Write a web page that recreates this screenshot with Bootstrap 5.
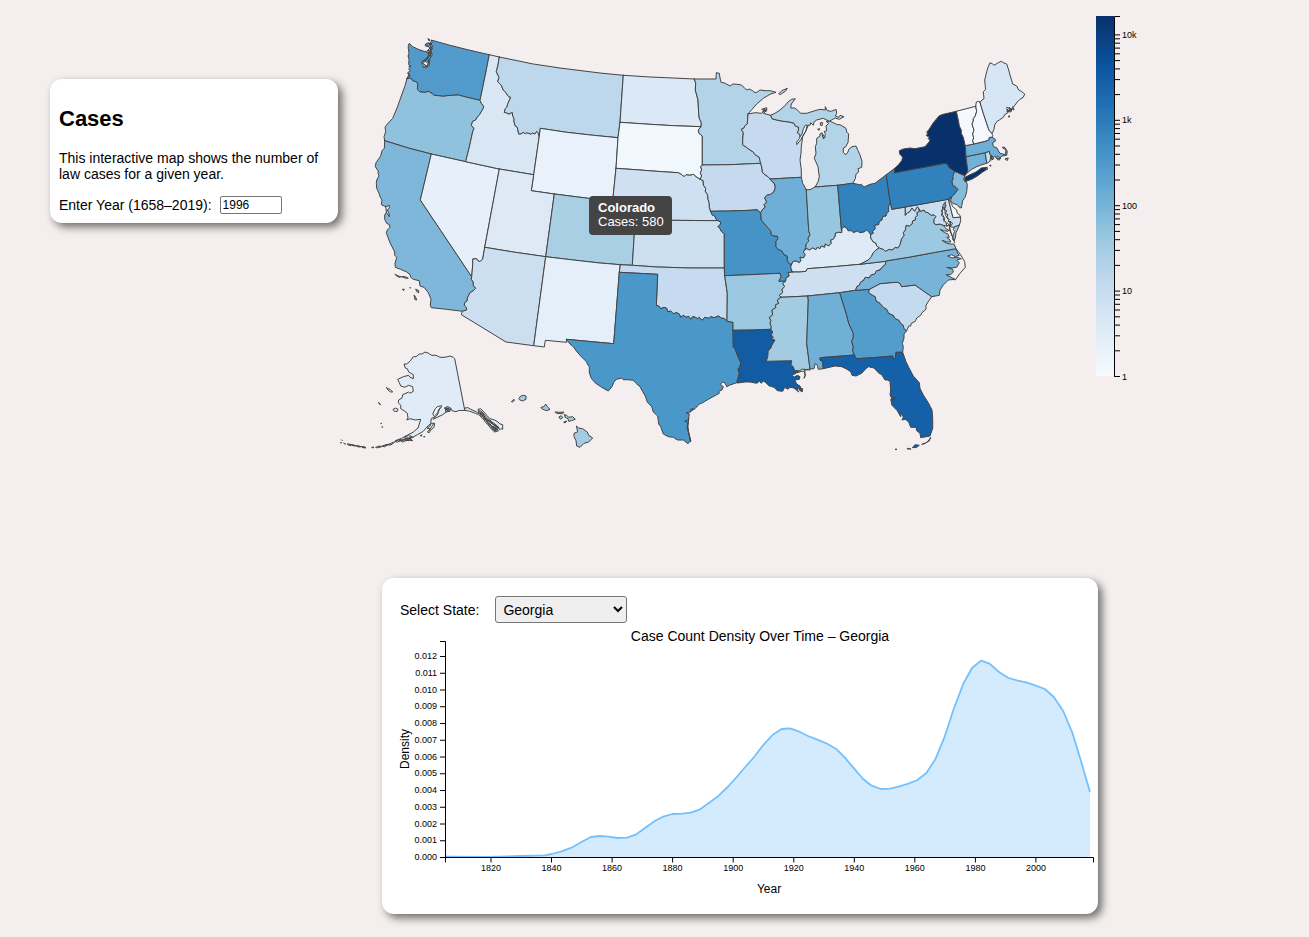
<!DOCTYPE html>
<html lang="en">
<head>
<meta charset="utf-8">
<meta name="viewport" content="width=device-width, initial-scale=1">
<title>Cases</title>
<link href="https://cdn.jsdelivr.net/npm/bootstrap@5.3.0/dist/css/bootstrap.min.css" rel="stylesheet">
<style>
  body { background: #f4eeee; color: #000; font: 14px/16px "Liberation Sans", Arial, sans-serif; }
  .page-grid { display: grid; grid-template-columns: 288px minmax(0, 1fr); padding: 0 167px 23px 50px; }
  .panel { background: #fff; border-radius: 12px; box-shadow: 4px 4px 9px rgba(0, 0, 0, .55); }
  .intro { margin-top: 79px; padding: 9px; }
  .intro h1 { font-size: 22px; line-height: 26px; margin: 18px 0; }
  .intro p { margin-bottom: 14px; }
  .year-row { gap: 8px; }
  .year-box { width: 62px; height: 18px; padding: 1px 2px; font-size: 12px; line-height: 14px; border: 1px solid #767676; border-radius: 2px; }
  .state-box { width: 132px; height: 27px; padding: 0 3px; background: #efefef; color: #000; border: 1px solid #767676; border-radius: 3px; }
  .controls { padding: 18px 18px 0; gap: 16px; }
  .density { margin: 0 44px; }
  .map-tip { left: 31.22%; top: 34.87%; padding: 5px 8px 6px 9px; background: #444; color: #fff; border-radius: 4px; font-size: 13px; line-height: 14px; }
  svg { display: block; width: 100%; height: auto; overflow: visible; }
  svg text { font-family: "Liberation Sans", Arial, sans-serif; fill: #000; }
  .tick-text { font-size: 9px; }
  .axis-name { font-size: 12px; }
  .chart-name { font-size: 14px; }
  .axis-line { fill: none; stroke: #000; stroke-width: 1; }
  #states path, #extras path { stroke: #444; stroke-width: 1; stroke-linejoin: round; stroke-linecap: round; }
  @media (max-width: 991px) {
    .page-grid { grid-template-columns: minmax(0, 1fr); padding: 16px; }
    .intro { margin-top: 0; }
    .density { margin: 16px 0 0; }
  }
</style>
</head>
<body>
<div class="page-grid">
  <aside>
    <section class="panel intro">
      <h1 class="fw-bold">Cases</h1>
      <p>This interactive map shows the number of law cases for a given year.</p>
      <div class="year-row d-flex align-items-center">
        <label for="year">Enter Year (1658–2019):</label>
        <input class="year-box" id="year" type="text" inputmode="numeric" value="1996">
      </div>
    </section>
  </aside>
  <main>
    <div class="position-relative mb-3">
      <svg viewBox="338 0 804 562" role="img" aria-label="Cases by state">
        <defs>
          <linearGradient id="blues" x1="0" y1="0" x2="0" y2="1">
            <stop offset="0" stop-color="#08306b"/><stop offset=".125" stop-color="#0a509b"/>
            <stop offset=".25" stop-color="#2171b5"/><stop offset=".375" stop-color="#4292c6"/>
            <stop offset=".5" stop-color="#6daed5"/><stop offset=".625" stop-color="#9dc9e1"/>
            <stop offset=".75" stop-color="#c6dbef"/><stop offset=".875" stop-color="#deebf7"/>
            <stop offset="1" stop-color="#f7fbff"/>
          </linearGradient>
        </defs>
        <g id="states"></g>
        <g id="extras"></g>
        <rect x="1096" y="16" width="18" height="360" fill="url(#blues)"/>
        <g id="legend"></g>
      </svg>
      <div class="map-tip position-absolute text-nowrap"><strong>Colorado</strong><br>Cases: 580</div>
    </div>
    <section class="panel density">
      <div class="controls d-flex align-items-center">
        <label for="state">Select State:</label>
        <select class="state-box" id="state"><option>Colorado</option><option selected>Georgia</option></select>
      </div>
      <svg viewBox="382 623 716 291" role="img" aria-label="Case count density">
        <g id="chart"></g>
        <text class="chart-name" x="760" y="641" text-anchor="middle">Case Count Density Over Time – Georgia</text>
        <text class="axis-name" x="769" y="893" text-anchor="middle">Year</text>
        <text class="axis-name" transform="translate(409 749) rotate(-90)" text-anchor="middle">Density</text>
      </svg>
    </section>
  </main>
</div>
<script src="https://cdn.jsdelivr.net/npm/bootstrap@5.3.0/dist/js/bootstrap.bundle.min.js"></script>
<script>
  // Each arc starts with a tile letter; its points are thirds of a map unit from that tile's origin.
  const tiles = { A: [360, 20], B: [360, 180], C: [540, 50], D: [540, 200], E: [700, 60], F: [700, 200], G: [860, 50], H: [800, 180], I: [330, 340] };
  const arcs = {
    wa_coast: 'A 141,176 146,166 143,158 151,152 146,148 152,140 146,134 147,118 144,108 147,100 145,85 145,76 148,70 158,80 175,88 192,94 203,97 206,104 203,112 192,120 183,127 190,132 188,140 196,143 206,138 209,126 206,118 212,112 217,104 212,98 214,90 209,84 218,80 214,72 216,66 213,60',
    wa_can: 'A 213,60 270,76 330,91 388,104', wa_id: 'A 388,104 376,165 362,232 360,241',
    wa_or: 'A 141,176 152,174 158,182 170,186 173,193 172,208 180,216 196,217 206,214 218,222 222,226 235,227 250,229 262,227 278,226 295,225 310,229 330,234 360,241',
    or_coast: 'A 141,176 134,200 124,228 112,262 98,295 82,312 75,322 77,335 72,350 74,362',
    or_id: 'A 360,241 364,250 371,259 370,265 360,282 350,294 347,300 338,304 334,316 342,325 338,335 330,372 317,425',
    or_ca: 'A 74,362 145,384 214,402', or_nv: 'A 214,402 317,425', id_nv: 'A 317,425 418,447', id_ut: 'A 418,447 521,464',
    id_wy: 'A 521,464 538,348', id_can: 'A 388,104 418,111',
    id_mt: 'A 418,111 414,135 409,155 417,172 413,185 424,196 430,210 436,216 446,230 452,232 444,250 440,262 436,266 433,277 438,278 447,282 457,277 458,288 462,295 462,305 466,318 472,322 476,342 484,341 490,337 496,341 500,338 512,342 518,339 524,342 530,334 534,338 538,348',
    mt_can: 'A 418,111 520,132 600,144 720,159 C 250,76', mt_wy: 'A 538,348 541,325 C 80,247 160,256 234,263',
    mt_nd: 'C 250,76 240,217', mt_sd: 'C 240,217 234,263', wy_sd: 'C 234,263 228,355', wy_ne: 'C 228,355 218,452',
    wy_ut: 'A 521,464 514,512 583,522', wy_co: 'A 583,522 C 145,445 218,452',
    nd_can: 'C 250,76 330,81 400,84 463,87',
    mn_can: 'C 463,87 528,87 529,68 538,70 540,84 543,97 556,100 570,108 578,102 590,103 600,104 605,106 612,112 620,120 628,117 638,122 645,128 652,126 660,120 675,122 690,122 708,127',
    nd_mn: 'C 463,87 467,100 466,120 470,135 474,150 476,190 478,205 484,218 483,230', nd_sd: 'C 240,217 330,223 400,227 483,230',
    sd_mn: 'C 483,230 475,240 477,250 487,258 487,345', sd_ia: 'C 487,345 482,350 485,360 481,368 485,378 480,388',
    sd_ne: 'C 228,355 300,360 350,364 415,368 425,374 432,380 438,374 450,376 460,373 468,380 480,388', mn_ia: 'C 487,345 570,344 662,340',
    mn_lake: 'C 708,127 690,133 670,145 650,162 636,178 624,192', mn_wi: 'C 624,192 622,222 614,228 612,234 604,238 610,248 608,270 608,285 615,289 622,294 630,300 640,306 645,314 658,322 660,332 662,340',
    ia_ne: 'C 480,388 490,392 490,405 497,415 496,424 503,435 504,448 508,460 508,472 512,484', ia_mo: 'F 32,34 90,33 150,31 172,29 178,36 182,38',
    ia_wi: 'E 182,310 186,325 187,336 192,342 204,350 210,357', ia_il: 'E 210,357 218,366 224,372 226,382 222,395 212,403 200,406 194,414 200,426 192,434 196,442 188,448 182,458',
    ne_mo: 'F 32,34 36,44 44,48 50,60', ks_mo: 'F 50,60 62,66 62,72 54,80 60,86 64,94 73,101 73,204', ks_ne: 'D 286,57 393,61 530,62',
    ne_co: 'D 218,2 290,6 286,57', ks_co: 'D 286,57 277,196', ok_co: 'D 241,194 277,196', ks_ok: 'D 277,196 350,201 450,204 552,204',
    ok_mo: 'F 73,204 74,227', ok_ar: 'F 74,227 82,280 81,362',
    tx_ok: 'D 238,217 353,223 349,316 356,318 362,326 372,322 380,325 383,335 392,333 400,341 410,338 418,342 422,352 430,346 438,352 446,349 452,358 458,350 466,352 472,356 478,352 486,361 494,352 506,355 512,350 522,353 535,348 545,355 552,355 561,364',
    nm_ok: 'D 241,194 238,217', tx_ar: 'D 561,364 579,367 579,391', tx_la: 'D 579,391 580,440 586,448 592,465 602,487 600,500 594,508 598,520 594,535 590,548',
    nm_tx: 'D 238,217 221,431 79,418', nm_mex: 'D 79,418 80,427 16,421 13,441 B 521,497', nm_az: 'B 521,497 557,230',
    nm_co: 'B 557,230 D 100,180 180,189 241,194', az_mex: 'B 521,497 438,486 304,404 307,394',
    az_ca: 'B 307,394 320,390 319,382 313,376 314,368 322,362 322,354 330,338 340,332 347,325 340,316 340,306 334,298 335,290',
    az_nv: 'B 335,290 338,255 338,237 350,236 354,242 360,245 368,237 374,202', nv_ut: 'B 374,202 418,-33', ut_az: 'B 374,202 460,216 557,230',
    ut_co: 'B 557,230 583,42', ca_nv: 'B 214,-78 181,60 335,290',
    ca_coast: 'A 74,362 73,385 66,392 62,408 48,428 46,440 55,453 54,460 57,468 50,480 49,490 50,505 B 58,42 60,50 66,60 64,74 78,80 82,92 74,105 74,118 80,130 88,134 90,142 82,150 79,158 84,172 90,188 98,204 104,216 104,226 110,232 105,250 106,262 122,268 140,276 150,284 152,292 160,298 178,302 180,318 192,322 205,338 213,358 211,375 214,383',
    ca_mex: 'B 214,383 260,388 307,394',
    tx_coast: 'D 590,548 570,555 560,560 556,550 548,546 541,553 550,560 546,570 536,574 538,580 510,595 485,610 478,612 465,626 452,634 460,626 452,628 452,636 438,638 448,642 445,660 434,664 443,666 442,685 446,700 452,722 444,731',
    tx_mex: 'D 79,418 90,432 100,440 108,452 122,468 140,486 142,492 148,500 148,518 154,535 165,548 182,560 205,573 216,560 222,545 230,538 245,534 250,539 262,539 280,541 288,550 300,560 308,575 316,588 322,606 335,620 340,636 353,648 356,672 362,680 370,702 385,710 400,712 412,720 430,720 444,731',
    la_ar: 'F 99,391 160,390 213,388', la_ms: 'F 213,388 218,396 214,404 220,412 214,418 225,420 216,435 212,445 205,452 203,470 199,484 275,482 273,494 280,500 284,512',
    la_coast: 'F 284,512 298,512 288,518 277,526 282,532 292,526 300,530 298,538 284,540 290,552 300,558 306,572 296,562 292,570 296,576 282,564 270,562 264,568 254,562 248,574 232,572 222,562 206,557 198,548 190,543 184,550 178,544 170,550 150,546 135,546 113,549',
    ar_mo: 'F 74,227 150,224 240,220 243,230 236,244 257,244', ar_tn: 'F 257,244 248,250 254,260 246,268 248,278 238,286 243,292',
    ar_ms: 'F 243,292 232,300 236,310 226,315 228,322 216,330 218,345 208,352 213,362 210,370 214,380 213,388',
    mo_il: 'F 182,38 184,60 192,70 204,84 212,92 214,104 222,108 232,108 234,116 228,124 228,140 234,148 245,152 252,164 262,168 262,182 268,192 275,192',
    mo_ky: 'F 275,192 272,202 277,216', mo_tn: 'F 277,216 264,218 268,228 258,234 257,244',
    ky_il: 'F 275,192 280,184 290,184 298,188 303,182 300,172 310,174 316,164 310,156 313,152',
    ky_in: 'F 313,152 320,146 328,150 338,144 348,149 352,142 360,146 364,138 374,142 376,132 386,138 394,130 392,120 400,118 406,108 406,100 416,97 425,98',
    ky_oh: 'F 425,98 426,86 432,80 440,84 444,92 454,92 460,98 472,93 480,98 492,96 500,90 506,96 512,104', ky_wv: 'F 512,104 512,114 520,126 528,130 530,138 538,143',
    ky_va: 'F 538,143 528,150 520,158 514,170 505,180 480,193', ky_tn: 'F 480,193 400,200 322,206 318,214 300,216 277,216',
    va_tn: 'F 480,193 557,184', tn_nc: 'F 557,184 556,194 546,202 540,210 530,212 524,222 512,226 508,234 496,232 490,242 482,246 478,256 470,260 467,271',
    tn_ga: 'F 467,271 419,278', tn_al: 'F 419,278 323,288', tn_ms: 'F 323,288 243,292',
    il_wi: 'E 210,357 304,352', il_lake: 'E 304,352 308,370 319,389', il_in: 'F 319,-31 326,92 330,104 324,116 326,124 318,132 318,142 313,152',
    in_lake: 'E 319,389 330,389 345,381', in_mi: 'E 345,381 413,376', in_oh: 'F 413,-44 425,98', mi_oh: 'E 413,376 458,370',
    oh_lake: 'E 458,370 470,372 480,375 484,373 492,381 510,373 525,370 G 79,374', oh_pa: 'G 79,374 88,440',
    oh_wv: 'H 269,50 272,68 266,78 266,95 260,100 258,108 248,110 246,120 238,125 236,134 224,136 226,146 218,154 220,160 212,164',
    pa_wvw: 'H 269,50 275,88', pa_wvs: 'H 275,88 316,81', pa_md: 'H 316,81 445,58', pa_de: 'G 265,446 275,440',
    pa_nj: 'G 275,440 284,432 294,418 288,412 278,405 276,394 280,386 278,380 284,364', pa_ny: 'G 284,364 266,352 264,344 255,340 104,368', pa_lake: 'G 104,368 104,355 79,374',
    ny_lake: 'G 104,368 104,355 115,345 125,332 128,322 119,312 118,302 130,297 150,294 165,296 180,293 195,290 208,275 210,268 204,266 208,262 198,256 204,252 200,246 206,240 220,218 238,197 250,193 289,184',
    ny_vt: 'G 289,184 296,215 298,228 304,240 304,250 310,262 316,287', ny_ma: 'G 316,287 318,320', ny_ct: 'G 318,320 323,360 320,370', ny_nj: 'G 284,364 315,377', ny_tip: 'G 315,377 320,370',
    vt_can: 'G 289,184 347,169', vt_nh: 'G 347,169 350,184 346,198 340,206 340,214 336,222 342,240 338,252 341,264 338,272 341,282', vt_ma: 'G 316,287 341,282',
    nh_ma: 'G 341,282 375,274 386,270 388,262 396,262', nh_me: 'G 396,250 388,242 385,235 370,190 360,157', nh_can: 'G 347,169 349,156 356,154 360,157', nh_sea: 'G 396,250 398,257 396,262',
    me_out: 'G 360,157 366,150 372,146 370,125 377,118 376,110 374,90 380,65 384,52 390,38 398,42 402,46 415,38 424,34 430,38 440,42 446,60 450,75 458,102 470,108 476,120 484,124 494,132 490,142 480,148 472,156 465,165 460,172 462,180 456,176 454,184 448,172 448,184 440,176 444,188 436,192 430,202 418,210 410,215 404,225 402,238 396,250',
    ma_sea: 'G 396,262 406,268 406,274 398,278 400,290 410,293 416,304 420,310 436,314 438,300 426,292 434,292 442,304 440,316 426,318 420,324 412,318 410,326 404,318 400,322',
    ma_ri: 'G 376,308 388,304 390,314 400,322', ri_sea: 'G 400,322 396,326 392,318 390,334 380,340', ct_ri: 'G 376,308 380,340', ma_ct: 'G 318,320 376,308', ct_sea: 'G 380,340 365,344 350,350 335,358 320,370',
    nj_sea: 'G 315,377 310,388 318,392 322,404 320,425 316,440 308,452 304,474 298,472 292,464 278,460 272,452 275,440',
    de_bay: 'G 275,440 268,450 274,460 278,470 290,480 292,490 300,496 301,501', de_md: 'G 301,501 279,503 265,446',
    md_sea: 'H 481,110 482,122 478,136 462,142 450,140 458,130 444,124 448,118 440,112 444,104 436,100 440,92 432,88 438,78 434,68 428,78 432,86 424,92 428,98 424,106 432,112 430,120 438,126 440,138 430,136',
    md_va: 'H 430,136 420,132 408,134 402,130 402,118 408,110 402,104 394,106 384,98 376,96 372,90 362,94 355,83', md_wv: 'H 355,83 352,80 344,94 336,84 328,96 322,98 316,106 316,81',
    va_wv: 'H 355,83 358,94 350,98 352,106 346,112 346,120 338,122 336,132 328,138 318,136 316,150 310,158 312,166 304,178 300,194 294,204 286,202 276,210 268,208 256,214 250,208 240,205',
    va_sea: 'H 430,136 438,146 446,150 444,154 430,152 420,148 434,158 444,162 448,172 440,172 450,180 452,186 440,186 426,181 440,190 452,192 462,192 468,206', va_nc: 'H 468,206 400,218 330,231 257,243',
    nc_sea: 'H 468,206 474,222 478,226 466,230 455,224 443,228 456,234 470,232 484,236 470,240 478,248 470,262 456,264 440,262 458,268 460,276 452,284 438,284 450,290 465,298 445,300 430,315 420,330 418,346 395,350',
    nc_sc: 'H 395,350 345,315 305,320 300,310 292,307 270,308 240,311 208,328', nc_ga: 'H 208,328 168,331',
    sc_ga: 'H 208,328 206,338 216,345 226,350 228,362 240,370 250,382 260,388 266,400 280,406 286,416 296,420 302,430 310,436 312,446 320,452',
    sc_sea: 'H 395,350 384,366 378,376 378,388 366,398 362,406 350,414 346,424 334,430 332,438 326,438 320,452', ga_sea: 'H 320,452 312,462 312,475 307,490 310,500 308,517',
    ga_fl: 'H 308,517 288,517 286,536 280,538 278,528 220,533 169,536 163,525', ga_al: 'F 419,278 440,345 446,370 460,400 460,412 455,425 460,440 458,452 463,465',
    al_fl: 'F 463,465 361,473 360,480 368,485 370,506', al_sea: 'F 370,506 355,508 352,496 346,490 342,506 330,507', al_ms: 'F 323,288 325,300 320,430 330,507', ms_sea: 'F 330,507 318,510 308,507 298,512 284,512',
    fl_sea: 'H 308,517 318,545 326,562 340,588 358,608 360,625 370,645 385,668 396,690 398,715 398,745 390,768 362,773 360,760 350,752 348,742 332,742 326,726 316,718 306,720 310,712 304,698 302,710 292,692 276,676 272,658 286,652 280,664 270,645 272,630 270,604 262,600 255,600 245,584 235,578 222,564 205,560 196,568 185,580 168,588 156,586 152,575 138,566 125,560 105,558 70,566',
    wi_sup: 'E 144,162 165,158 185,160 192,152 185,148 200,143 200,152 190,160 212,166', wi_mi: 'E 212,166 216,176 230,180 250,184 268,186 282,190 286,198 296,202 295,212 292,218 300,224 300,230',
    wi_lake: 'E 300,230 298,236 290,246 290,254 302,240 306,232 318,212 320,200 324,198 316,216 308,230 304,260 303,280 300,300 304,330 304,352',
    mi_up: 'E 212,166 225,160 240,150 256,136 265,125 275,118 286,116 274,132 272,144 284,144 292,150 302,160 320,160 345,152 360,148 376,150 376,140 382,152 394,154 408,148 410,160 406,168 416,172 420,166 432,170 418,178 405,174 388,184 370,175 350,180 342,186 340,196 332,188 330,196 316,196 310,206 306,222 300,230',
    mi_low: 'E 345,381 354,366 358,350 354,320 343,295 348,280 346,260 350,250 350,235 360,228 360,222 366,218 368,232 374,234 376,220 372,215 380,212 378,198 386,190 378,184 390,184 400,188 412,194 420,194 438,205 440,216 446,222 444,248 436,262 430,264 430,278 438,284 444,276 446,268 456,260 468,258 474,272 480,285 486,304 485,322 474,326 476,336 468,342 466,356 458,370'
  };
  // Fill colour, then the arcs of the state's ring; "-" walks an arc backwards.
  const shapes = [
    ['#529acc', 'wa_coast wa_can wa_id -wa_or'], ['#91c2dd', 'wa_or or_id -or_nv -or_ca -or_coast'],
    ['#7eb7da', 'or_ca ca_nv -az_ca -ca_mex -ca_coast'], ['#e7f0fa', 'or_nv id_nv -nv_ut -az_nv -ca_nv'],
    ['#d9e6f4', 'id_can id_mt -id_wy -id_ut -id_nv -or_id -wa_id'], ['#bdd7ec', 'mt_can mt_nd mt_sd -mt_wy -id_mt'],
    ['#e9f1fb', 'mt_wy wy_sd wy_ne -wy_co -wy_ut id_wy'], ['#dde9f5', 'id_ut wy_ut -ut_co -ut_az nv_ut'],
    ['#a9cfe5', 'wy_co ne_co ks_co -ok_co -nm_co ut_co'], ['#ccdff0', 'ut_az -nm_az az_mex az_ca az_nv'],
    ['#e5eff9', 'nm_co nm_ok nm_tx nm_mex nm_az'], ['#dbe8f6', 'nd_can nd_mn -nd_sd -mt_nd'],
    ['#f0f7fd', 'nd_sd sd_mn sd_ia -sd_ne -wy_sd -mt_sd'], ['#cee0f2', 'sd_ne ia_ne ne_mo -ks_ne -ne_co -wy_ne'],
    ['#ccdff1', 'ks_ne ks_mo -ks_ok -ks_co'], ['#c6dbef', 'ok_co ks_ok ok_mo ok_ar -tx_ok -nm_ok'],
    ['#4a97c9', 'tx_ok tx_ar tx_la tx_coast -tx_mex -nm_tx'], ['#b3d3e8', 'mn_can mn_lake mn_wi -mn_ia -sd_mn -nd_mn'],
    ['#c5daee', 'mn_ia ia_wi ia_il -ia_mo -ia_ne -sd_ia'], ['#4593c7', 'ia_mo mo_il mo_ky mo_tn -ar_mo -ok_mo -ks_mo -ne_mo'],
    ['#9ac8e1', 'ar_mo ar_tn ar_ms -la_ar -tx_ar -ok_ar'], ['#125ca4', 'la_ar la_ms la_coast -tx_la'],
    ['#c5daef', 'wi_sup wi_mi wi_lake -il_wi -ia_wi -mn_wi'], ['#6fafd7', 'il_wi il_lake il_in -ky_il -mo_il -ia_il'],
    ['#b2d3e8', 'mi_up -wi_mi'], ['#b2d3e8', 'mi_low -mi_oh -in_mi'], ['#97c6e0', 'in_lake in_mi in_oh -ky_in -il_in'],
    ['#3282be', 'mi_oh oh_lake oh_pa oh_wv -ky_oh -in_oh'], ['#deebf7', 'ky_il ky_in ky_oh ky_wv ky_va ky_tn -mo_ky'],
    ['#cddff1', '-ky_tn va_tn tn_nc tn_ga tn_al tn_ms -ar_tn -mo_tn'], ['#a3cce3', '-tn_ms al_ms ms_sea -la_ms -ar_ms'],
    ['#70b0d7', '-tn_al ga_al al_fl al_sea -al_ms'], ['#539dcc', '-tn_ga -nc_ga sc_ga ga_sea ga_fl -ga_al'],
    ['#1561a9', '-ga_fl fl_sea -al_fl'], ['#c4daee', '-nc_sc sc_sea -sc_ga'], ['#78b4d8', '-va_nc nc_sea nc_sc nc_ga -tn_nc'],
    ['#9cc8e1', '-md_va va_sea va_nc -va_tn -ky_va -va_wv'], ['#c9ddf0', 'pa_wvw pa_wvs -md_wv va_wv -ky_wv -oh_wv'],
    ['#cbdef1', 'pa_md -de_md md_sea md_va md_wv'], ['#f4f9fe', 'pa_de de_bay de_md'],
    ['#3181bd', '-pa_ny -pa_nj -pa_de -pa_md -pa_wvs -oh_pa -pa_lake'], ['#85bcdc', 'ny_nj nj_sea pa_nj'],
    ['#08306b', 'ny_lake ny_vt ny_ma ny_ct -ny_tip -ny_nj pa_ny'], ['#73b2d8', 'ma_ct ct_ri ct_sea -ny_ct'],
    ['#ccdff1', 'ma_ri ri_sea -ct_ri'], ['#6eafd6', 'vt_ma nh_ma ma_sea -ma_ri -ma_ct -ny_ma'],
    ['#f5f9ff', 'vt_can vt_nh -vt_ma -ny_vt'], ['#f5f9ff', 'nh_can -nh_me nh_sea -nh_ma -vt_nh'], ['#d6e6f4', 'me_out nh_me']
  ];
  // Islands and standalone outlines.
  const islands = [
    ['#08306b', 'G 314,394 315,382 330,374 348,366 364,354 382,352 374,360 384,356 368,366 352,378 335,388'],
    ['#9cc8e1', 'H 478,136 472,150 468,158 466,174 462,183 458,178 460,164 464,154 460,148 462,142'],
    ['#b2d3e8', 'E 237,101 245,92 262,85 256,94 242,103'],
    ['#529acc', 'A 197,72 206,68 212,74 206,80 197,78'], ['#529acc', 'A 206,98 212,92 214,102 208,108'], ['#529acc', 'A 205,56 210,60 208,62'],
    ['#529acc', 'A 196,122 206,112 210,118 200,126'],
    ['#7eb7da', 'B 106,283 114,288 124,290 118,292 110,288'], ['#7eb7da', 'B 126,290 136,290 145,295 136,294'], ['#7eb7da', 'B 128,328 133,328 131,331'],
    ['#7eb7da', 'B 168,328 176,332 176,338 172,336'], ['#7eb7da', 'B 163,346 167,352 170,360 166,359'], ['#7eb7da', 'B 150,323 152,323 151,324'],
    ['#f4eeee', 'B 78,80 88,76 88,84 82,90 88,102 88,110 80,98'],
    ['#b2d3e8', 'E 362,188 368,188 366,197 362,196'], ['#b2d3e8', 'E 354,207 359,206 357,210'],
    ['#6eafd6', 'G 412,326 422,324 418,330'], ['#6eafd6', 'G 436,326 445,324 442,331'], ['#ccdff1', 'G 390,346 393,345 392,348'], ['#d6e6f4', 'G 446,198 449,198 448,201'],
    ['#1561a9', 'H 338,802 345,794 358,796 350,802'], ['#1561a9', 'H 322,806 326,805 332,807'], ['#1561a9', 'H 366,793 372,790 376,790'], ['#1561a9', 'H 378,788 386,782 392,772 388,782'], ['#1561a9', 'H 287,807 290,807 289,809'],
    ['#125ca4', 'F 314,517 316,526 312,535 315,527'], ['#125ca4', 'F 298,565 308,566 306,576 298,570'],
    ['#4a97c9', 'D 446,655 442,680 448,705 452,726 446,700 444,680'],
    ['#dfecf8', 'I 404,210 374,56 370,52 360,48 345,52 330,52 318,46 305,46 296,40 285,36 276,42 268,42 258,50 250,50 240,64 230,72 222,72 226,84 232,86 236,96 250,104 250,116 240,112 236,106 220,110 203,118 208,128 212,138 224,142 236,136 248,140 250,154 240,160 236,156 218,164 216,174 206,180 205,188 212,196 212,206 222,212 232,220 234,234 230,240 240,236 256,240 272,238 268,252 264,264 250,276 232,286 215,295 196,302 216,300 232,294 248,292 262,284 280,274 290,262 302,250 304,236 314,230 308,222 316,206 322,200 335,197 332,204 325,210 324,222 310,238 322,232 338,224 350,215 345,206 352,200 362,206 366,212 378,215 385,212'],
    ['#dfecf8', 'I 404,210 404,204 415,203 422,208 440,216 448,222 444,208 452,206 462,216 470,226 480,236 494,240 504,246 510,252 518,254 518,268 512,266 506,272 494,276 484,266 478,258 466,246 460,236 446,224 436,220 420,214'],
    ['#dfecf8', 'I 456,216 470,232 482,244 474,242 462,230'], ['#dfecf8', 'I 478,240 500,256 508,266 496,258 484,250'], ['#dfecf8', 'I 468,240 480,256 492,268 500,270 492,274 480,262'], ['#dfecf8', 'I 450,218 460,232 468,240 456,234'], ['#dfecf8', 'I 486,262 496,256 504,264 494,270'],
    ['#dfecf8', 'I 292,264 300,258 304,250 314,250 312,262 302,270 298,278 292,276 300,268'], ['#dfecf8', 'I 344,204 354,200 364,206 358,214 348,216 346,210 356,206'],
    ['#dfecf8', 'I 190,208 196,204 204,208 202,214 194,214'], ['#dfecf8', 'I 170,143 174,146 180,148 188,156 182,156 174,150'], ['#dfecf8', 'I 146,188 149,190 151,194'],
    ['#dfecf8', 'I 154,250 155,250 154,251'], ['#dfecf8', 'I 157,260 158,261 157,262'], ['#dfecf8', 'I 272,286 276,284 274,288'], ['#dfecf8', 'I 282,290 284,290'],
    ['#dfecf8', 'I 214,302 222,298 240,296 248,302 232,300 218,306'], ['#dfecf8', 'I 196,304 206,300 214,298 204,306'], ['#dfecf8', 'I 224,290 238,284 246,292 236,298'], ['#dfecf8', 'I 176,314 186,308 194,306 184,314'],
    ['#dfecf8', 'I 158,318 168,314 174,314 164,320'], ['#dfecf8', 'I 138,322 148,318 154,320 144,323'], ['#dfecf8', 'I 126,322 131,321 130,323'], ['#dfecf8', 'I 96,320 104,320 108,324 100,323'],
    ['#dfecf8', 'I 80,317 86,318 92,320 86,321'], ['#dfecf8', 'I 66,314 72,315 76,318 70,317'], ['#dfecf8', 'I 54,313 62,313 64,316 58,316'], ['#dfecf8', 'I 42,310 46,312'], ['#dfecf8', 'I 32,308 34,308'], ['#dfecf8', 'I 35,300 36,301'],
    ['#a3cce3', 'I 567,175 572,168 580,166 588,168 588,178 578,183 570,180'], ['#a3cce3', 'I 545,184 552,178 554,180 548,186'], ['#a3cce3', 'I 634,202 642,200 647,192 652,200 660,208 650,212 638,208'],
    ['#a3cce3', 'I 676,216 690,217 702,216 698,221 680,220'], ['#a3cce3', 'I 688,230 694,227 698,233 692,237'], ['#a3cce3', 'I 704,224 710,226 716,232 728,230 736,238 724,242 716,244 714,236 706,232'], ['#a3cce3', 'I 702,246 710,243 706,248'],
    ['#a3cce3', 'I 740,259 746,264 758,266 772,276 776,286 788,294 776,306 762,310 750,322 740,318 738,302 732,290 732,280 742,276']
  ];
  // Open lines: barrier islands, inlets and river mouths.
  const lines = [
    'H 468,206 482,225 494,245 496,262 480,280 466,300', 'H 452,124 448,140 454,160 464,188', 'H 436,66 434,84 436,104 444,118', 'H 441,128 446,134 440,138 450,136',
    'H 428,80 426,100 434,116 432,124', 'H 446,122 452,132 448,148 456,168',
    'E 190,146 200,152 188,154 198,150', 'E 368,222 372,230 370,236', 'A 206,70 218,86 204,92 216,100 208,110 200,118 190,130 200,140 206,124', 'A 198,74 210,84 200,94 212,104',
    'A 211,66 213,84 209,98 213,108 205,122 204,136', 'A 186,128 196,120 208,106', 'A 190,142 196,136 204,140 196,140', 'A 142,172 150,168 146,160', 'A 146,140 152,138',
    'G 440,172 456,178 440,184 452,186 458,170', 'G 394,316 402,326 394,330', 'G 392,320 398,330 392,324', 'F 300,514 316,514 312,508 330,510', 'F 280,524 290,518 300,516',
    'I 230,290 244,300 238,290 250,292 228,298', 'I 484,248 500,262 490,262 504,270 480,256', 'I 446,210 460,230 474,244 488,262 498,274', 'I 452,212 468,236 486,250 506,262', 'I 348,206 362,208 350,212 360,214',
    'I 206,304 222,300 236,302', 'I 316,226 326,214 330,204', 'I 296,272 308,256 310,252', 'I 52,312 70,316 88,319 104,322', 'I 148,321 166,316 182,311'
  ];
  const NS = 'http://www.w3.org/2000/svg';
  const add = (parent, tag, attrs, text) => {
    const node = document.createElementNS(NS, tag);
    for (const k in attrs) node.setAttribute(k, attrs[k]);
    if (text) node.textContent = text;
    parent.appendChild(node);
  };
  const decode = s => {
    let o; const out = [];
    for (const t of s.split(' ')) {
      if (tiles[t]) { o = tiles[t]; continue; }
      const [x, y] = t.split(',').map(Number);
      out.push((o[0] + x / 3).toFixed(1) + ' ' + (o[1] + y / 3).toFixed(1));
    }
    return out;
  };
  const statesG = document.getElementById('states'), extras = document.getElementById('extras');
  for (const [fill, ring] of shapes) {
    const pts = ring.split(' ').flatMap(a => a[0] === '-' ? decode(arcs[a.slice(1)]).reverse() : decode(arcs[a]));
    add(statesG, 'path', { d: 'M' + pts.join('L') + 'Z', fill });
  }
  for (const [fill, s] of islands) add(extras, 'path', { d: 'M' + decode(s).join('L') + 'Z', fill });
  for (const s of lines) add(extras, 'path', { d: 'M' + decode(s).join('L'), fill: 'none' });

  // Log legend axis.
  const legend = document.getElementById('legend'), names = ['1', '10', '100', '1k', '10k'];
  add(legend, 'path', { class: 'axis-line', d: 'M1120 16.5H1114.5V376.5H1120' });
  for (let e = 0; e < 5; e++) for (let m = 1; m < 10; m++) {
    const y = 376.5 - 85.4 * (e + Math.log10(m));
    if (y < 17) break;
    add(legend, 'path', { class: 'axis-line', d: `M1114.5 ${y.toFixed(1)}H1120` });
    if (m === 1) add(legend, 'text', { class: 'tick-text', x: 1122, y: Math.round(y + 3) }, names[e]);
  }

  // Density chart.
  const chart = document.getElementById('chart');
  const curve = '445.5,856.6 488,857 521,856 544.6,855.3 551.7,854 561,851.7 571.5,847.7 581,842.3 590.8,837 599.8,836 608.3,836.7 617.7,838 627.2,837.7 635.7,834.7 646,827.3 656,820.3 664,816.3 672.5,814 682.4,813.7 690.9,812.7 699.4,809.7 708.8,803 718.7,795.7 728.6,786 736.7,777 745.2,767 754.1,757 763,745.3 772.5,735 781.5,729 790,728.3 798.5,731.3 808,736 817.4,739.7 826.3,743.3 835.8,748.7 844.7,757.3 854.2,768.7 863.1,779 871.6,785.7 881,789 890.5,788.7 899.5,786.3 908.4,783.7 917.4,780 926.4,773 935.3,759.3 944.8,736.3 953.7,709 963.2,684 972,668 981,660.7 989.6,663.7 999,672 1008.5,678 1018,680.7 1027,682.7 1035.9,685.7 1044.8,689 1053.8,697 1063.2,711 1072.2,732.3 1080.7,760 1090,792';
  add(chart, 'polygon', { points: '445.5,857 ' + curve + ' 1090,857', fill: '#d4ebfe' });
  add(chart, 'polyline', { points: curve, fill: 'none', stroke: '#74c0fc', 'stroke-width': 1.8, 'stroke-linejoin': 'round' });
  add(chart, 'path', { class: 'axis-line', d: 'M440 641.5H445.5V857.5H440M445.5 862.5V857.5H1093.5V862.5' });
  for (let i = 0; i <= 12; i++) {
    const y = 857.5 - i * 16.75;
    add(chart, 'path', { class: 'axis-line', d: `M440 ${y}H445.5` });
    add(chart, 'text', { class: 'tick-text', x: 437, y: Math.round(y + 2.6), 'text-anchor': 'end' }, (i / 1000).toFixed(3));
  }
  for (let i = 0; i < 10; i++) {
    const x = 491 + i * 60.55;
    add(chart, 'path', { class: 'axis-line', d: `M${x.toFixed(1)} 857.5V862.5` });
    add(chart, 'text', { class: 'tick-text', x: x.toFixed(1), y: 871, 'text-anchor': 'middle' }, String(1820 + i * 20));
  }
</script>
</body>
</html>
